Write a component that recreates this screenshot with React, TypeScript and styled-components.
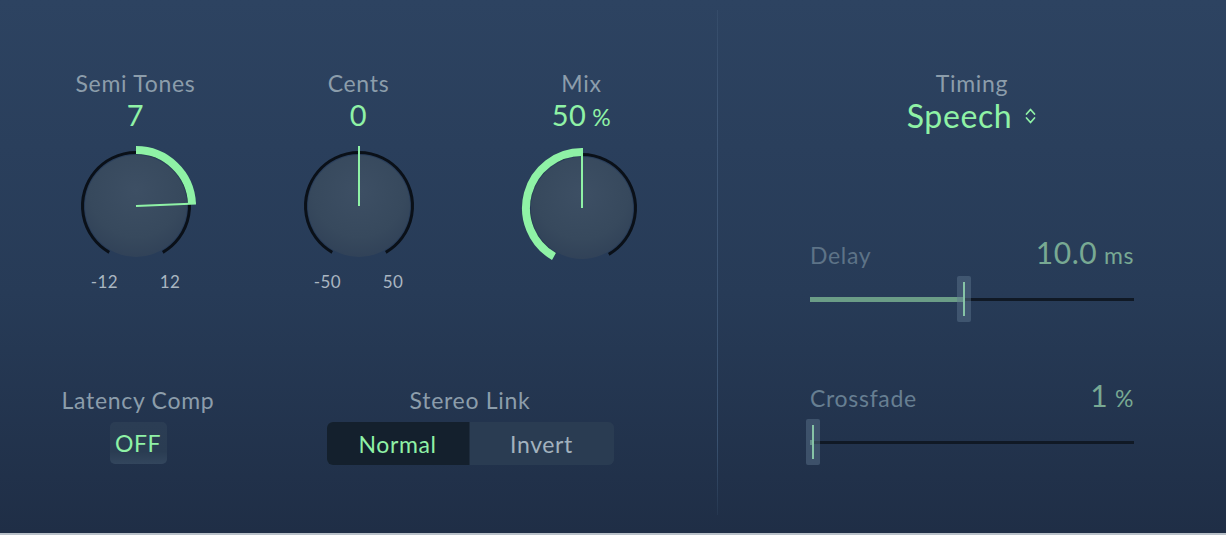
import React from 'react'
import styled, { createGlobalStyle } from 'styled-components'

const GlobalStyle = createGlobalStyle`
  html, body {
    margin: 0;
    padding: 0;
    width: 1226px;
    height: 535px;
    overflow: hidden;
    font-family: Lato, "Open Sans", "Liberation Sans", sans-serif;
  }
`

const GREEN = '#8ff2a6'

const Panel = styled.div`
  display: grid;
  grid-template-columns: 717px 1px 1fr;
  width: 1226px;
  height: 535px;
  box-sizing: border-box;
  background: linear-gradient(180deg, #2d4361 0%, #273b57 55%, #1f2e46 100%);
  border-bottom: 2px solid #b9c1c9;
`

const Divider = styled.div`
  margin: 10px 0 18px;
  background: linear-gradient(180deg, rgba(70, 95, 125, 0.3), #3e5675 20%, #3a5270 85%, rgba(60, 85, 112, 0.2));
`

const LeftSide = styled.div`
  display: flex;
  flex-direction: column;
  padding-top: 69px;
`

const KnobRow = styled.div`
  display: grid;
  grid-template-columns: repeat(3, 223px);
  padding-left: 24px;
`

const KnobCell = styled.div`
  display: flex;
  flex-direction: column;
  align-items: center;
`

const Label = styled.div`
  font-size: 23px;
  line-height: 28px;
  color: #8c9dab;
  letter-spacing: 0.7px;
  white-space: nowrap;
`

const Value = styled.div`
  font-size: 29px;
  line-height: 36px;
  color: ${GREEN};
  white-space: nowrap;
  letter-spacing: 0.5px;
`

const Unit = styled.span`
  font-size: 23px;
  margin-left: 6px;
`

const KnobFrame = styled.div`
  margin-top: 8px;
`

const Scale = styled.div`
  display: flex;
  justify-content: center;
  gap: 42px;
  margin-top: 1px;
  font-size: 17px;
  line-height: 20px;
  color: #aab6c1;
  letter-spacing: 0.3px;
`

const BottomRow = styled.div`
  display: flex;
  align-items: flex-start;
  margin-top: 94px;
  padding-left: 38px;
  gap: 89px;
`

const Control = styled.div<{ $width: number }>`
  width: ${(p) => p.$width}px;
  display: flex;
  flex-direction: column;
  align-items: center;
  gap: 8px;
`

const ToggleButton = styled.div`
  width: 57px;
  height: 42px;
  display: flex;
  align-items: center;
  justify-content: center;
  border-radius: 5px;
  background: linear-gradient(180deg, #2b3d54, #2a3c52 70%, #33465d);
  color: ${GREEN};
  font-size: 23px;
  letter-spacing: 0.5px;
`

const Segmented = styled.div`
  display: flex;
  height: 43px;
  border-radius: 6px;
  overflow: hidden;
  background: #2a3c52;
`

const Segment = styled.div<{ $active?: boolean; $width: number }>`
  width: ${(p) => p.$width}px;
  display: flex;
  align-items: center;
  justify-content: center;
  font-size: 23px;
  letter-spacing: 0.6px;
  background: ${(p) => (p.$active ? '#14202d' : '#2a3c52')};
  color: ${(p) => (p.$active ? GREEN : '#a3b2be')};
  border-left: ${(p) => (p.$active ? 'none' : '1px solid #1f2d3e')};
`

const RightSide = styled.div`
  display: flex;
  flex-direction: column;
  align-items: center;
  padding-top: 69px;
`

const TimingValue = styled.div`
  display: flex;
  align-items: center;
  gap: 12px;
  font-size: 32px;
  line-height: 38px;
  letter-spacing: 0.6px;
  color: ${GREEN};
`

const Sliders = styled.div`
  display: flex;
  flex-direction: column;
  width: 324px;
  margin-top: 99px;
  gap: 50px;
`

const SliderBlock = styled.div`
  display: flex;
  flex-direction: column;
`

const SliderHead = styled.div`
  display: flex;
  justify-content: space-between;
  align-items: baseline;
  height: 37px;
`

const SliderLabel = styled.div<{ $tone: string }>`
  font-size: 23px;
  letter-spacing: 0.7px;
  color: ${(p) => p.$tone};
`

const SliderValue = styled.div`
  font-size: 30px;
  letter-spacing: 0.5px;
  color: #78a993;
`

const SliderUnit = styled.span`
  font-size: 23px;
  margin-left: 7px;
`

const Track = styled.div`
  position: relative;
  height: 56px;
`

const Rail = styled.div`
  position: absolute;
  left: 0;
  right: 0;
  top: 27px;
  height: 3px;
  background: #101925;
`

const Fill = styled.div`
  position: absolute;
  left: 0;
  top: 26px;
  height: 5px;
  background: #6b9d87;
`

const Handle = styled.div`
  position: absolute;
  top: 5px;
  width: 14px;
  height: 46px;
  margin-left: -7px;
  border-radius: 2px;
  background: rgba(95, 120, 145, 0.45);

  &::after {
    content: '';
    position: absolute;
    left: 6px;
    top: 6px;
    bottom: 6px;
    width: 2px;
    background: #86c3a6;
  }
`

type Deg = number

const polar = (c: number, r: number, a: Deg) => {
  const rad = (a * Math.PI) / 180
  return [c + r * Math.sin(rad), c - r * Math.cos(rad)]
}

const arc = (c: number, r: number, a1: Deg, a2: Deg) => {
  const [x1, y1] = polar(c, r, a1)
  const [x2, y2] = polar(c, r, a2)
  const large = Math.abs(a2 - a1) > 180 ? 1 : 0
  return `M ${x1} ${y1} A ${r} ${r} 0 ${large} 1 ${x2} ${y2}`
}

interface KnobProps {
  from: Deg
  to: Deg
  id: string
}

const SIZE = 130
const C = SIZE / 2

const Knob: React.FC<KnobProps> = ({ from, to, id }) => {
  const [px, py] = polar(C, 60, to)
  return (
    <KnobFrame>
      <svg width={SIZE} height={SIZE} viewBox={`0 0 ${SIZE} ${SIZE}`} style={{ display: 'block' }}>
        <defs>
          <radialGradient id={`body-${id}`} cx="50%" cy="35%" r="65%">
            <stop offset="0%" stopColor="#3d4f64" />
            <stop offset="70%" stopColor="#37495d" />
            <stop offset="100%" stopColor="#314258" />
          </radialGradient>
        </defs>
        <path d={arc(C, 53.5, -150, 150)} fill="none" stroke="#0a1018" strokeWidth={3} />
        <circle cx={C} cy={C} r={51} fill={`url(#body-${id})`} />
        {from !== to && (
          <path d={arc(C, 56, Math.min(from, to), Math.max(from, to))} fill="none" stroke={GREEN} strokeWidth={8} />
        )}
        <line x1={C} y1={C} x2={px} y2={py} stroke={GREEN} strokeWidth={2} />
      </svg>
    </KnobFrame>
  )
}

const Chevrons = () => (
  <svg width="13" height="22" viewBox="0 0 13 22">
    <path d="M2.5 9 L6.5 4.5 L10.5 9 M2.5 13 L6.5 17.5 L10.5 13" fill="none" stroke={GREEN} strokeWidth={1.7} strokeLinecap="round" strokeLinejoin="round" />
  </svg>
)

interface SliderProps {
  label: string
  tone: string
  value: string
  unit: string
  fraction: number
}

const Slider: React.FC<SliderProps> = ({ label, tone, value, unit, fraction }) => (
  <SliderBlock>
    <SliderHead>
      <SliderLabel $tone={tone}>{label}</SliderLabel>
      <SliderValue>
        {value}
        <SliderUnit>{unit}</SliderUnit>
      </SliderValue>
    </SliderHead>
    <Track>
      <Rail />
      <Fill style={{ width: `${fraction * 100}%` }} />
      <Handle style={{ left: `${fraction * 100}%` }} />
    </Track>
  </SliderBlock>
)

export default function App() {
  return (
    <>
      <GlobalStyle />
      <Panel>
        <LeftSide>
          <KnobRow>
            <KnobCell>
              <Label>Semi Tones</Label>
              <Value>7</Value>
              <Knob id="semi" from={0} to={87.5} />
              <Scale>
                <span>-12</span>
                <span>12</span>
              </Scale>
            </KnobCell>
            <KnobCell>
              <Label>Cents</Label>
              <Value>0</Value>
              <Knob id="cents" from={0} to={0} />
              <Scale>
                <span>-50</span>
                <span>50</span>
              </Scale>
            </KnobCell>
            <KnobCell>
              <Label>Mix</Label>
              <Value>
                50<Unit>%</Unit>
              </Value>
              <Knob id="mix" from={-150} to={0} />
            </KnobCell>
          </KnobRow>
          <BottomRow>
            <Control $width={200}>
              <Label>Latency Comp</Label>
              <ToggleButton>OFF</ToggleButton>
            </Control>
            <Control $width={286}>
              <Label>Stereo Link</Label>
              <Segmented>
                <Segment $active $width={142}>Normal</Segment>
                <Segment $width={144}>Invert</Segment>
              </Segmented>
            </Control>
          </BottomRow>
        </LeftSide>
        <Divider />
        <RightSide>
          <Label>Timing</Label>
          <TimingValue>
            Speech
            <Chevrons />
          </TimingValue>
          <Sliders>
            <Slider label="Delay" tone="#5d7387" value="10.0" unit="ms" fraction={0.475} />
            <Slider label="Crossfade" tone="#677f92" value="1" unit="%" fraction={0.01} />
          </Sliders>
        </RightSide>
      </Panel>
    </>
  )
}
